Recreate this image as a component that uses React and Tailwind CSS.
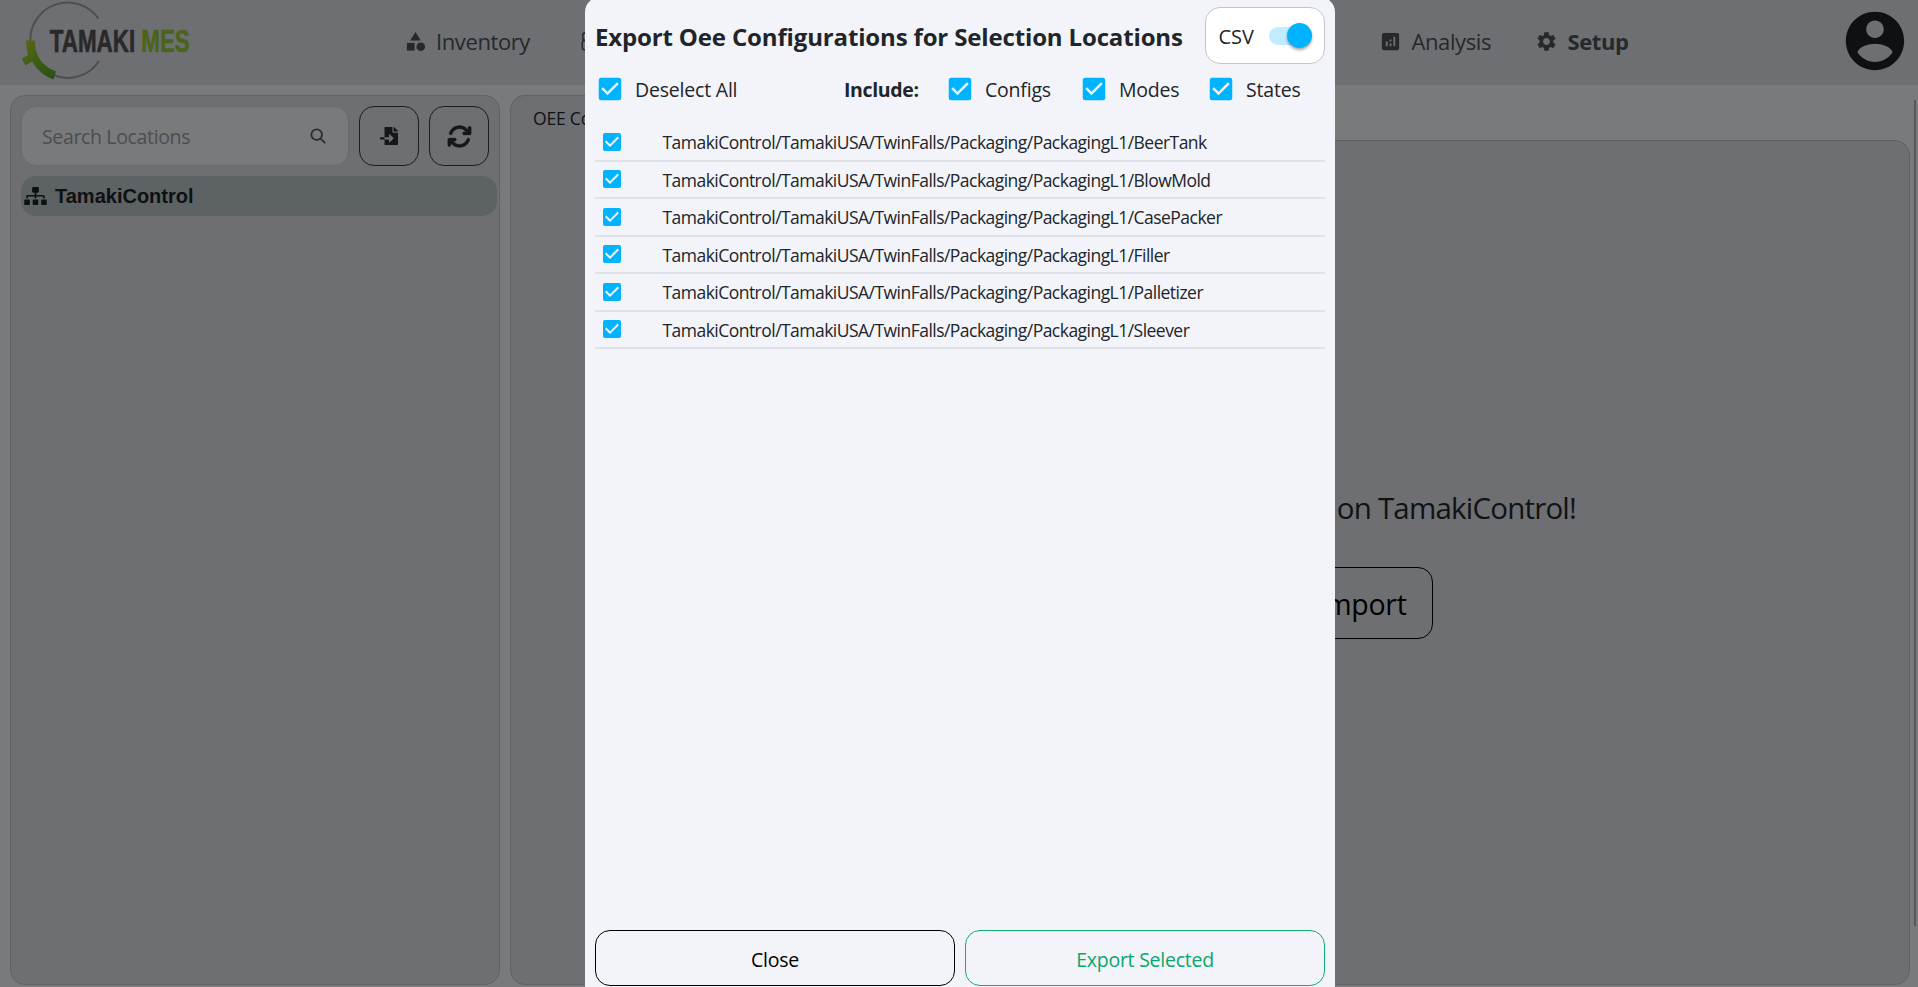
import React from "react";
import { MdCategory, MdAnalytics, MdSettings, MdCheckBox } from "react-icons/md";
import { FaFileImport, FaSitemap } from "react-icons/fa";
import { FaArrowsRotate } from "react-icons/fa6";

const machines = ["BeerTank", "BlowMold", "CasePacker", "Filler", "Palletizer", "Sleever"];
const basePath = "TamakiControl/TamakiUSA/TwinFalls/Packaging/PackagingL1/";

function Logo() {
  return (
    <svg className="h-[85px] w-[200px]" viewBox="0 0 200 85">
      <defs>
        <linearGradient id="leaf" x1="0" y1="0" x2="1" y2="1">
          <stop offset="0" stopColor="#566a15" />
          <stop offset="1" stopColor="#274f16" />
        </linearGradient>
      </defs>
      <path d="M98.5 18.5A37.5 37.5 0 0 0 30.3 41" fill="none" stroke="#4d4e50" strokeWidth="2" />
      <path d="M54 75.3A37.5 37.5 0 0 0 99 61" fill="none" stroke="#4d4e50" strokeWidth="2" />
      <path
        d="M26 40.5L34.8 40.5Q35 46 36 50.5C38.5 60 45 67.5 56 71.5L53.5 79.5C43.5 75.5 36.5 69.5 32 61.5L25.3 65.5L21.8 58.5L28 55Q26 48 26 40.5Z"
        fill="url(#leaf)"
      />
      <text
        x="49.8"
        y="52"
        textLength="140"
        lengthAdjust="spacingAndGlyphs"
        className="fill-[#29292a] stroke-[#29292a] font-['Liberation_Sans_Narrow','Liberation_Sans',sans-serif] text-[32px] font-bold [stroke-width:0.7px]"
      >
        TAMAKI <tspan className="fill-[#4b641b] stroke-[#4b641b]">MES</tspan>
      </text>
    </svg>
  );
}

function LayersIcon() {
  return (
    <svg className="size-[23px]" viewBox="0 0 24 24" fill="none" stroke="currentColor" strokeWidth="1.6">
      <rect x="4" y="3" width="16" height="8" rx="2.5" />
      <rect x="3.5" y="11" width="17" height="9.5" rx="2" />
    </svg>
  );
}

function SearchIcon() {
  return (
    <svg className="size-[16px]" viewBox="0 0 16 16" fill="none" stroke="#2c2f31" strokeWidth="1.9">
      <circle cx="6.7" cy="6.7" r="5.3" />
      <path d="M10.6 10.6L15.2 15.2" />
    </svg>
  );
}

function AccountIcon() {
  return (
    <svg className="size-[70px] fill-[#0e1113]" viewBox="0 0 24 24">
      <path d="M12 2C6.48 2 2 6.48 2 12s4.48 10 10 10 10-4.48 10-10S17.52 2 12 2zm0 3c1.66 0 3 1.34 3 3s-1.34 3-3 3-3-1.34-3-3 1.34-3 3-3zm0 14.2c-2.5 0-4.71-1.28-6-3.22.03-1.99 4-3.08 6-3.08 1.99 0 5.97 1.09 6 3.08-1.29 1.94-3.5 3.22-6 3.22z" />
    </svg>
  );
}

function Header() {
  return (
    <header className="flex h-[85px] shrink-0 items-center bg-[#6e6f73] text-[22px] text-[#25292b]">
      <Logo />
      <nav className="ml-[204px] flex h-full flex-1 items-center pb-[2px] leading-none">
        <div className="flex w-[175px] items-center gap-[9px]">
          <MdCategory className="size-[23px]" />
          <span className="pb-[2px] tracking-[-0.4px]">Inventory</span>
        </div>
        <div className="w-[800px]">
          <LayersIcon />
        </div>
        <div className="flex w-[156px] items-center gap-[9.5px]">
          <MdAnalytics className="size-[23px]" />
          <span className="pb-[2px] tracking-[-0.4px]">Analysis</span>
        </div>
        <div className="flex items-center gap-[9.5px] font-bold">
          <MdSettings className="size-[23px]" />
          <span className="pb-[2px] tracking-[-0.4px]">Setup</span>
        </div>
      </nav>
      <div className="mr-[8px] pb-[3px]">
        <AccountIcon />
      </div>
    </header>
  );
}

function Sidebar() {
  return (
    <aside className="flex w-[490px] shrink-0 flex-col rounded-[15px] border border-[#616265] bg-[#6e6f73] pt-[10px] pl-[10px]">
      <div className="flex gap-[10px]">
        <div className="flex h-[60px] w-[328px] items-center justify-between rounded-[15px] border border-[#6a6b6e] bg-[#797a7b] pr-[22px] pl-[20px]">
          <span className="pt-[2px] text-[19.5px] tracking-[-0.35px] text-[#4a4e54]">Search Locations</span>
          <SearchIcon />
        </div>
        <button className="flex size-[60px] items-center justify-center rounded-[15px] border border-[#1b1d1f] text-[#15181a]">
          <FaFileImport className="size-[18px]" />
        </button>
        <button className="flex size-[60px] items-center justify-center rounded-[15px] border border-[#1b1d1f] text-[#15181a]">
          <FaArrowsRotate className="size-[25px] stroke-current [stroke-width:6px]" />
        </button>
      </div>
      <div className="mt-[10px] flex h-[40px] w-[476px] items-center gap-[8px] rounded-[15px] bg-[#5d6264] pl-[3px] text-[#0e1113]">
        <FaSitemap className="h-[18px] w-[23px]" />
        <span className="font-['Liberation_Sans',Arial,sans-serif] text-[20px] leading-none font-bold">TamakiControl</span>
      </div>
    </aside>
  );
}

function Content() {
  return (
    <main className="flex w-[1400px] flex-col">
      <div className="relative -mb-px flex h-[46px] w-[240px] items-center rounded-tl-[15px] rounded-tr-[15px] border border-b-0 border-[#616265] bg-[#6e6f73] pl-[22px] text-[17.5px] tracking-[-0.2px] text-[#101315]">
        OEE Configuration
      </div>
      <section className="flex flex-1 flex-col items-center rounded-[15px] rounded-tl-none border border-[#616265] bg-[#6e6f73]">
        <p className="mt-[347px] w-[732px] text-right text-[29.5px] leading-[40px] tracking-[-0.8px] text-[#101315]">
          No OEE configuration on TamakiControl!
        </p>
        <div className="mt-[39px] flex w-[445px] justify-end">
          <button className="h-[72px] w-[146px] rounded-[15px] border border-black pt-[3px] pr-[25px] text-right text-[28.5px] tracking-[-0.3px] text-black">
            Import
          </button>
        </div>
      </section>
    </main>
  );
}

function Check({ label }) {
  return (
    <label className="flex items-center gap-[10px]">
      <MdCheckBox className="size-[30px] shrink-0 text-[#00b3ff]" />
      <span className="pt-[2px]">{label}</span>
    </label>
  );
}

function ExportDialog() {
  return (
    <div className="absolute top-[-3px] left-[585px] z-20 flex h-[1003px] w-[750px] flex-col rounded-[15px] bg-[#f2f4f9] px-[10px] pt-[10px] text-[#212529]">
      <div className="flex h-[57px] items-center justify-between">
        <h1 className="pt-[2px] text-[24px] leading-none font-bold tracking-[-0.15px] whitespace-nowrap">
          Export Oee Configurations for Selection Locations
        </h1>
        <div className="flex h-[57px] w-[120px] items-center justify-between rounded-[15px] border border-[#c2c6cc] bg-white pr-[12px] pl-[12.5px]">
          <span className="pt-[2px] text-[20px] leading-none">CSV</span>
          <div className="flex h-[18px] w-[43px] items-center justify-end rounded-full bg-[#bfecff]">
            <div className="size-[25px] rounded-full bg-[#00b3ff] shadow-[0_2px_3px_rgba(0,0,0,0.35)]" />
          </div>
        </div>
      </div>
      <div className="mt-[10px] grid h-[30px] grid-cols-[249px_101px_134px_127px_1fr] items-center text-[19.5px] leading-none tracking-[-0.2px]">
        <Check label="Deselect All" />
        <span className="pt-[2px] font-bold tracking-[-0.35px]">Include:</span>
        <Check label="Configs" />
        <Check label="Modes" />
        <Check label="States" />
      </div>
      <div className="mt-[20.2px] flex-1">
        {machines.map((name) => (
          <div key={name} className="flex h-[37.5px] items-center border-b-2 border-[#dee1e6] pl-[5px]">
            <MdCheckBox className="size-[24px] text-[#00b3ff]" />
            <span className="ml-[38.5px] pt-[2.3px] text-[17.5px] leading-none tracking-[-0.53px] whitespace-nowrap">{basePath + name}</span>
          </div>
        ))}
      </div>
      <div className="mb-[14px] grid grid-cols-2 gap-[10px] text-[19.5px] tracking-[-0.25px]">
        <button className="h-[56px] rounded-[15px] border border-black pt-[3px] text-black">Close</button>
        <button className="h-[56px] rounded-[15px] border border-[#12ab73] pt-[3px] text-[#08a66c]">Export Selected</button>
      </div>
    </div>
  );
}

export default function App() {
  return (
    <div className="relative flex h-[987px] w-[1918px] flex-col overflow-hidden bg-[#797a7c] font-['Open_Sans','Noto_Sans',sans-serif]">
      <Header />
      <div className="flex flex-1 gap-[10px] pt-[10px] pb-[2px] pl-[10px]">
        <Sidebar />
        <Content />
        <div className="mt-[5px] -ml-[6px] h-[826px] w-[2px] bg-[#57585a]" />
      </div>
      <ExportDialog />
    </div>
  );
}
